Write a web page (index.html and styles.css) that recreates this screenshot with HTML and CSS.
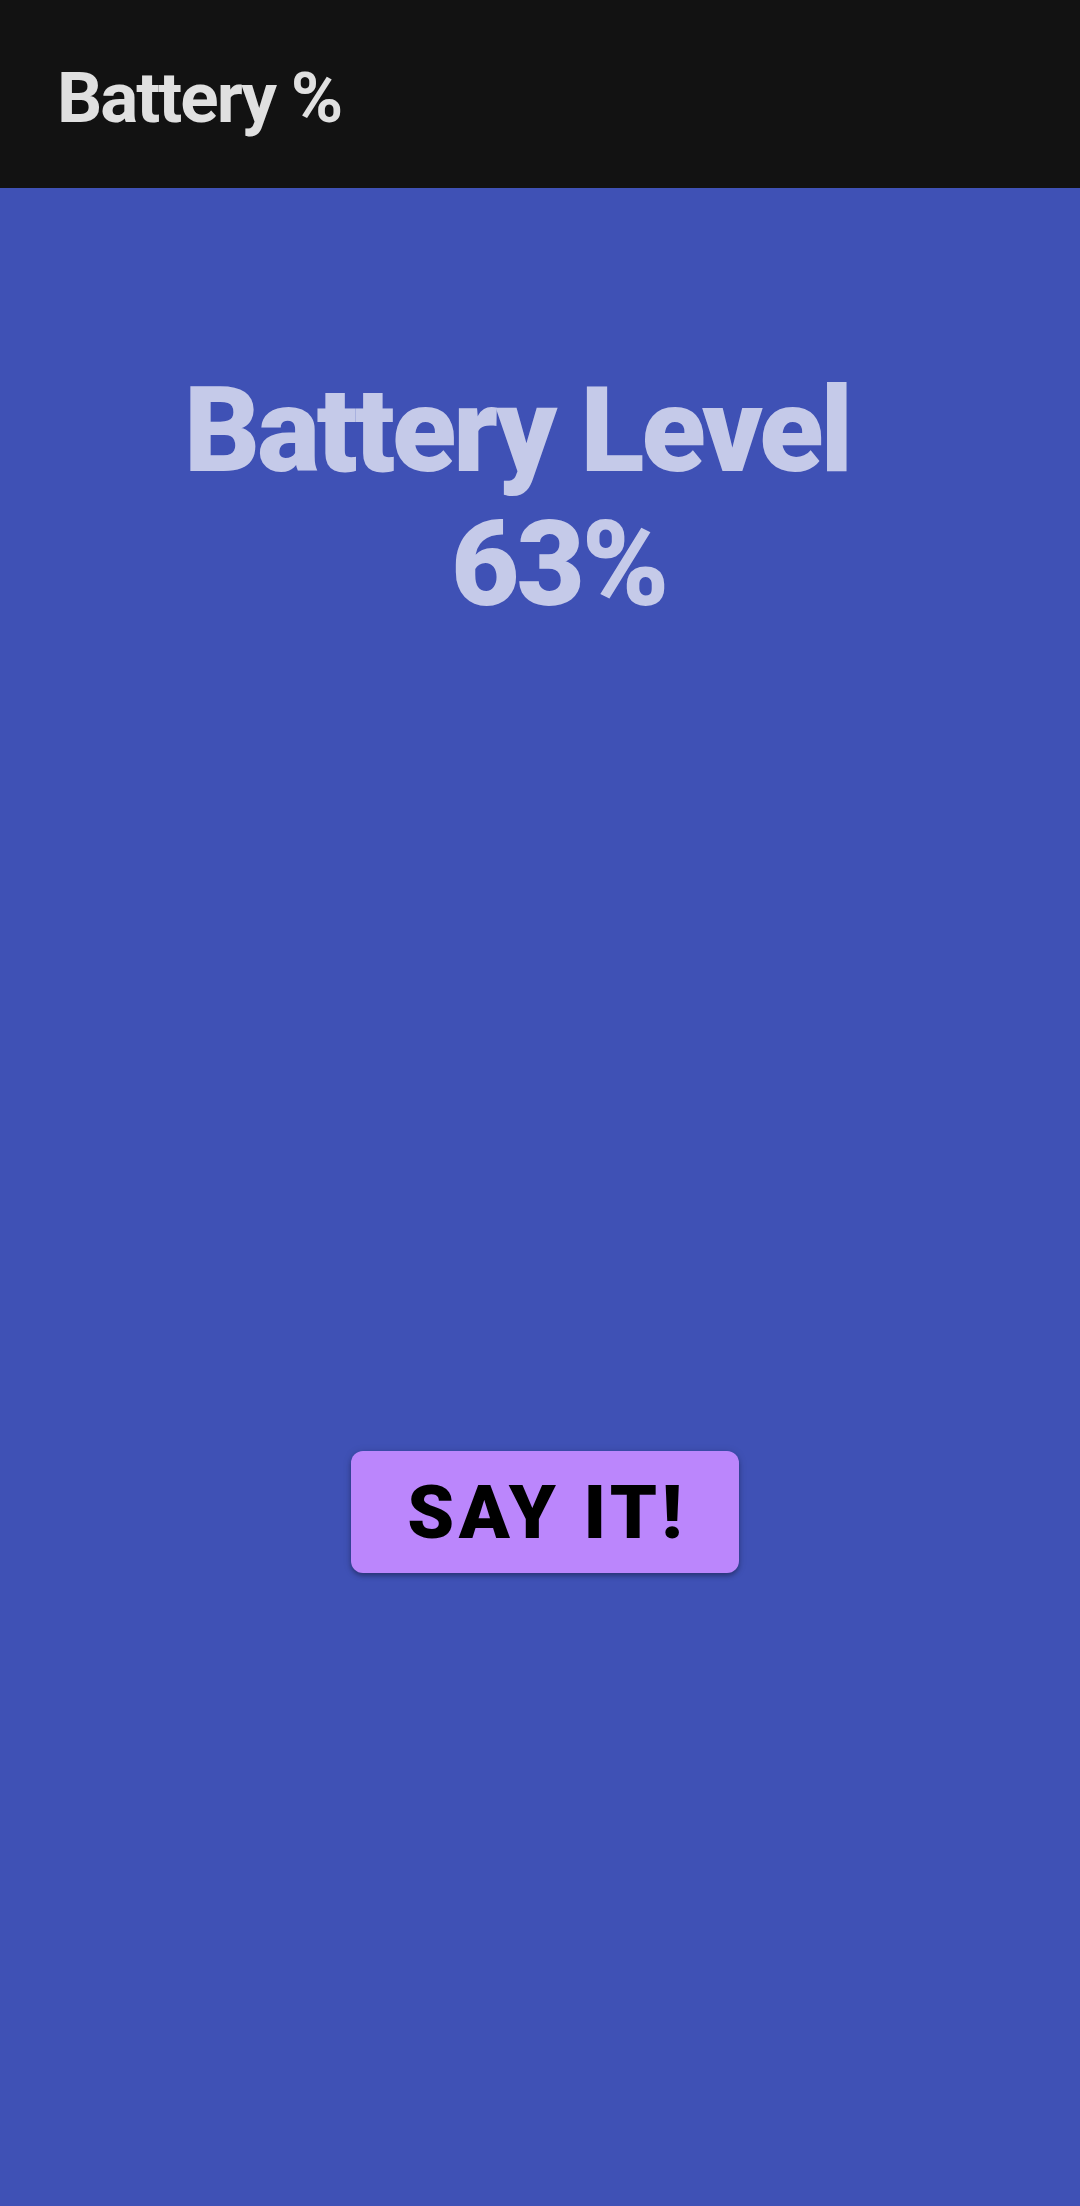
FILE: index.html
```html
<!DOCTYPE html>
<html>
<head>
<meta charset="utf-8">
<link rel="stylesheet" href="styles.css">
</head>
<body>
<header class="appbar"><h1 class="title">Battery %</h1></header>
<main class="content">
  <div class="headline">
    <div class="line line-1">Battery Level</div>
    <div class="line line-2">63%</div>
  </div>
  <div class="action">
    <button class="say">SAY IT!</button>
  </div>
</main>
</body>
</html>
```
FILE: styles.css
```css
html, body {
  margin: 0;
  padding: 0;
}
body {
  width: 1080px;
  height: 2206px;
  background: #3f51b5;
  font-family: Roboto, "Noto Sans", sans-serif;
  display: flex;
  flex-direction: column;
}
.appbar {
  height: 188px;
  background: #121212;
  display: flex;
  align-items: center;
  padding-left: 57px;
  box-sizing: border-box;
}
.title {
  margin: 0;
  color: #e0e0e0;
  font-size: 71px;
  font-weight: 700;
  line-height: 1;
  letter-spacing: -2px;
  padding-top: 6px;
}
.content {
  flex: 1;
  display: flex;
  flex-direction: column;
}
.headline {
  padding-top: 176px;
  color: #c5cae9;
  font-weight: 900;
  font-size: 118px;
  line-height: 134px;
  letter-spacing: -3px;
}
.line {
  white-space: nowrap;
}
.line-1 { padding-left: 184px; }
.line-2 { padding-left: 451px; }
.action {
  padding-top: 819px;
  padding-left: 351px;
}
.say {
  width: 388px;
  height: 122px;
  border: none;
  border-radius: 12px;
  background: #bb86fc;
  color: #000;
  font-family: Roboto, sans-serif;
  font-weight: 900;
  font-size: 75px;
  letter-spacing: 4.5px;
  padding: 0 0 0 4px;
  box-shadow: 0 3px 4px rgba(0,0,0,0.25), 0 1px 8px rgba(0,0,0,0.15);
}
```
